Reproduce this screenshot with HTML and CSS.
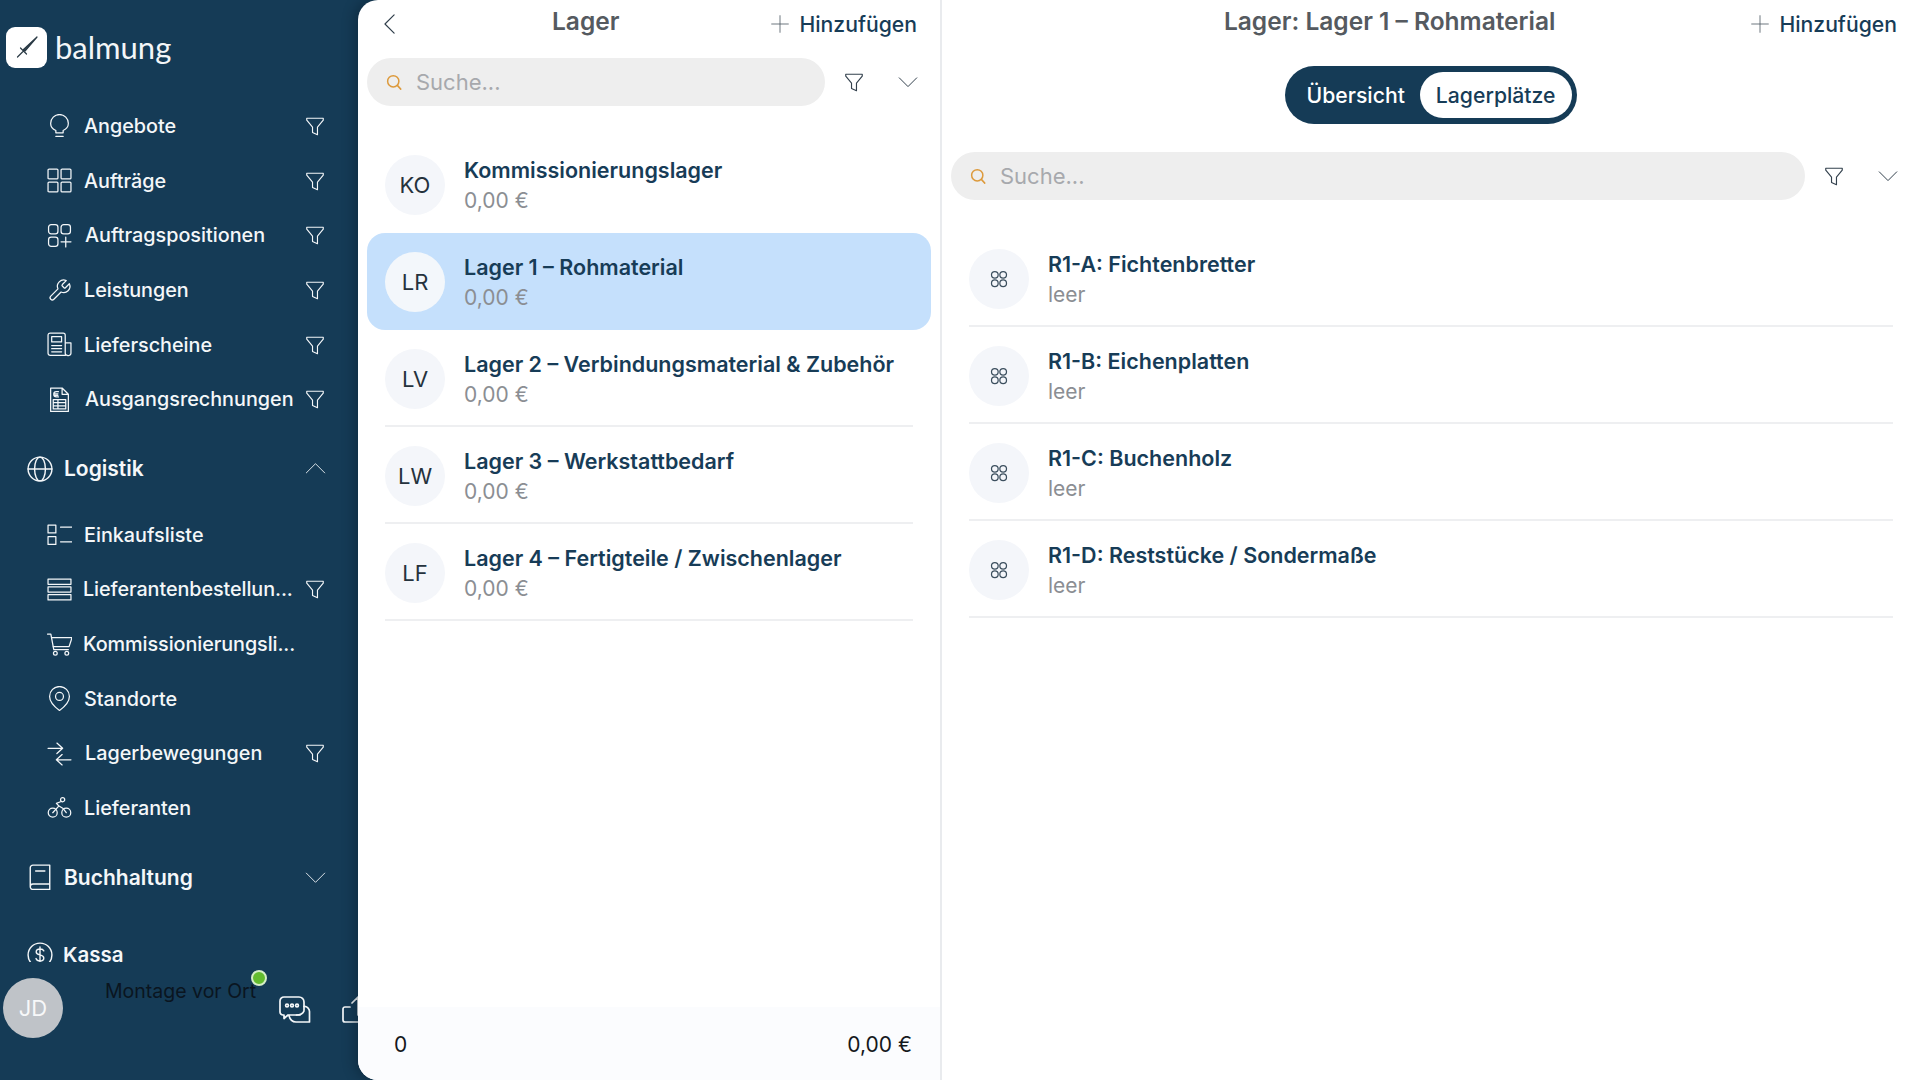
FILE: index.html
```
<!DOCTYPE html>
<html lang="de">
<head>
<meta charset="utf-8">
<title>Lager</title>
<link rel="stylesheet" href="styles.css">
</head>
<body>
<svg class="defs" width="0" height="0" aria-hidden="true">
  <symbol id="i-filter" viewBox="0 0 24 24"><path d="M3 3.500h18v2.200l-6.300 7.600v8.200l-5.400-2.400v-5.800L3 5.700z"/></symbol>
  <symbol id="i-search" viewBox="0 0 24 24"><circle cx="11" cy="11" r="7.500"/><path d="M16.500 16.500l4.500 5"/></symbol>
  <symbol id="i-down" viewBox="0 0 24 24"><path d="M1.500 7l10.500 10.500L22.500 7"/></symbol>
  <symbol id="i-up" viewBox="0 0 24 24"><path d="M1.500 17L12 6.500 22.500 17"/></symbol>
  <symbol id="i-back" viewBox="0 0 24 24"><path d="M16.500 2L6.500 12l10 10"/></symbol>
  <symbol id="i-plus" viewBox="0 0 24 24"><path d="M12 2v20M2 12h20"/></symbol>
  <symbol id="i-places" viewBox="0 0 24 24"><circle cx="7" cy="7" r="4"/><circle cx="17" cy="7" r="4"/><circle cx="7" cy="17" r="4"/><circle cx="17" cy="17" r="4"/></symbol>
  <symbol id="i-bulb" viewBox="0 0 24 24"><path d="M8.500 18v-2.200C5.400 14.400 3.500 12 3.500 9a8.500 8.500 0 0 1 17 0c0 3-1.900 5.400-5 6.800V18zM8.500 21.500h7"/></symbol>
  <symbol id="i-grid" viewBox="0 0 24 24"><rect x="1" y="1" width="9.500" height="9.500" rx="1"/><rect x="13.500" y="1" width="9.500" height="9.500" rx="1"/><rect x="1" y="13.500" width="9.500" height="9.500" rx="1"/><rect x="13.500" y="13.500" width="9.500" height="9.500" rx="1"/></symbol>
  <symbol id="i-gridplus" viewBox="0 0 24 24"><rect x="1.500" y="1.500" width="9" height="9" rx="2.500"/><rect x="13.500" y="1.500" width="9" height="9" rx="2.500"/><rect x="1.500" y="13.500" width="9" height="9" rx="2.500"/><path d="M18 13.500v9.500M13.500 18h9.500"/></symbol>
  <symbol id="i-wrench" viewBox="0 0 24 24"><path d="M14.700 6.300a1 1 0 0 0 0 1.400l1.600 1.600a1 1 0 0 0 1.400 0l3.770-3.770a6 6 0 0 1-7.940 7.940l-6.910 6.910a2.120 2.120 0 0 1-3-3l6.910-6.910a6 6 0 0 1 7.940-7.940l-3.760 3.760z"/></symbol>
  <symbol id="i-news" viewBox="0 0 24 24"><path d="M17.500 22.500H3A2 2 0 0 1 1 20.500V3A2 2 0 0 1 3 1h12.500a2 2 0 0 1 2 2v17.500a2 2 0 0 0 2 2 2.500 2.500 0 0 0 3.500-2V10.500h-5.500"/><rect x="4.500" y="4.500" width="9.500" height="5"/><path d="M4.500 13h9.500M4.500 16h9.500M4.500 19h9.500"/></symbol>
  <symbol id="i-invoice" viewBox="0 0 24 24"><path d="M14.500 1H3.500v22.500h17V7zM14.500 1v6h6"/><path d="M11 4.500H9a2 2 0 0 0 0 5h2M6.500 6.500h4M6.500 8h4"/><path d="M6 12h12v9H6zM6 15h12M6 18h12M10.500 12v9"/></symbol>
  <symbol id="i-globe" viewBox="0 0 24 24"><circle cx="12" cy="12" r="11"/><ellipse cx="12" cy="12" rx="5" ry="11"/><path d="M1 12h22"/></symbol>
  <symbol id="i-list" viewBox="0 0 24 24"><rect x="1" y="3" width="7.500" height="7.500"/><rect x="1" y="14" width="7.500" height="7.500"/><path d="M13 5h11M13 19h11"/></symbol>
  <symbol id="i-rows" viewBox="0 0 24 24"><rect x="1" y="2" width="22" height="5"/><rect x="1" y="9.500" width="22" height="5"/><rect x="1" y="17" width="22" height="5"/></symbol>
  <symbol id="i-cart" viewBox="0 0 24 24"><path d="M.5 2h3.200l2.800 15h14"/><path d="M4.500 5.500H24l-2.800 8.500H6"/><circle cx="8" cy="20.500" r="1.800"/><circle cx="19" cy="20.500" r="1.800"/></symbol>
  <symbol id="i-pin" viewBox="0 0 24 24"><path d="M12 23.500C8 20.500 2.500 15.500 2.500 10a9.500 9.500 0 0 1 19 0c0 5.500-5.500 10.500-9.500 13.500z"/><circle cx="12" cy="10" r="3.800"/></symbol>
  <symbol id="i-swap" viewBox="0 0 24 24"><path d="M1 7h13M9.500 2l5.500 5-5.500 5M23 18H10M14.500 13L9 18l5.500 5"/></symbol>
  <symbol id="i-bike" viewBox="0 0 24 24"><circle cx="5.500" cy="17" r="4.300"/><circle cx="18.500" cy="17" r="4.300"/><circle cx="15" cy="4.500" r="2"/><path d="M5.500 17l6-6.500 4 2.500 3 4M11.500 10.500L9 8l4-1.500"/></symbol>
  <symbol id="i-book" viewBox="0 0 24 24"><path d="M3 20.500V3.500A2.500 2.500 0 0 1 5.500 1H21v22.500H5.500A2.500 2.500 0 0 1 3 21a2.500 2.500 0 0 1 2.500-2.500H21"/><path d="M8 6.500h8.500"/></symbol>
  <symbol id="i-dollar" viewBox="0 0 24 24"><circle cx="12" cy="12" r="11"/><path d="M15.500 8.200C15 7 13.500 6.500 12 6.500c-2 0-3.500 1-3.500 2.700 0 3.600 7 1.800 7 5.500 0 1.800-1.600 2.800-3.500 2.800-1.700 0-3.200-.8-3.700-2.200M12 4.500v15"/></symbol>
  <symbol id="i-chat" viewBox="0 0 32 28"><path d="M21 19H9l-4 3.500V19H4a3 3 0 0 1-3-3V5a4 4 0 0 1 4-4h15a5 5 0 0 1 5 5v8"/><path d="M25 10.500a5 5 0 0 1 5.500 5V26H17c-3.500 0-6-2-7-6.500"/><path d="M17.500 19c3.500 0 6.500-1.500 7.500-4"/><circle cx="8" cy="9.500" r="1.400"/><circle cx="13" cy="9.500" r="1.400"/><circle cx="18" cy="9.500" r="1.400"/></symbol>
  <symbol id="i-upload" viewBox="0 0 32 28"><path d="M8 11H3a2 2 0 0 0-2 2v11a2 2 0 0 0 2 2h26a2 2 0 0 0 2-2V13a2 2 0 0 0-2-2h-5M16 19V1M10 7l6-6 6 6"/></symbol>
</svg>

<div class="app">
  <aside class="sidebar">
    <div class="brand">
      <div class="brand-mark">
        <svg class="sword" viewBox="0 0 24 24"><path d="M22 2L8.500 14.500l1.500 1.500L22 2z"/><path d="M5.500 13l6 6M9 15.500l-6.500 6.500"/></svg>
      </div>
      <span class="brand-name">balmung</span>
    </div>

    <nav class="nav">
      <a class="item"><svg class="ico"><use href="#i-bulb"/></svg><span class="label">Angebote</span><svg class="fil"><use href="#i-filter"/></svg></a>
      <a class="item"><svg class="ico"><use href="#i-grid"/></svg><span class="label">Aufträge</span><svg class="fil"><use href="#i-filter"/></svg></a>
      <a class="item"><svg class="ico"><use href="#i-gridplus"/></svg><span class="label shift">Auftragspositionen</span><svg class="fil"><use href="#i-filter"/></svg></a>
      <a class="item"><svg class="ico"><use href="#i-wrench"/></svg><span class="label">Leistungen</span><svg class="fil"><use href="#i-filter"/></svg></a>
      <a class="item"><svg class="ico"><use href="#i-news"/></svg><span class="label">Lieferscheine</span><svg class="fil"><use href="#i-filter"/></svg></a>
      <a class="item"><svg class="ico"><use href="#i-invoice"/></svg><span class="label shift">Ausgangsrechnungen</span><svg class="fil"><use href="#i-filter"/></svg></a>

      <a class="group open"><svg class="gico"><use href="#i-globe"/></svg><span class="label">Logistik</span><svg class="chev"><use href="#i-up"/></svg></a>

      <a class="item"><svg class="ico"><use href="#i-list"/></svg><span class="label">Einkaufsliste</span></a>
      <a class="item"><svg class="ico"><use href="#i-rows"/></svg><span class="label trunc">Lieferantenbestellun...</span><svg class="fil"><use href="#i-filter"/></svg></a>
      <a class="item"><svg class="ico"><use href="#i-cart"/></svg><span class="label trunc">Kommissionierungsli...</span></a>
      <a class="item"><svg class="ico"><use href="#i-pin"/></svg><span class="label">Standorte</span></a>
      <a class="item"><svg class="ico"><use href="#i-swap"/></svg><span class="label shift">Lagerbewegungen</span><svg class="fil"><use href="#i-filter"/></svg></a>
      <a class="item"><svg class="ico"><use href="#i-bike"/></svg><span class="label">Lieferanten</span></a>

      <a class="group closed"><svg class="gico"><use href="#i-book"/></svg><span class="label">Buchhaltung</span><svg class="chev"><use href="#i-down"/></svg></a>
      <a class="group cash"><svg class="gico"><use href="#i-dollar"/></svg><span class="label">Kassa</span></a>
    </nav>

    <div class="user">
      <div class="avatar">JD</div>
      <div class="status">Montage vor Ort<span class="dot"></span></div>
      <svg class="chat"><use href="#i-chat"/></svg>
      <svg class="upload"><use href="#i-upload"/></svg>
    </div>
  </aside>

  <main class="content">
    <section class="panel left">
      <header class="head">
        <svg class="back"><use href="#i-back"/></svg>
        <h1 class="title">Lager</h1>
        <button class="add"><svg class="plus"><use href="#i-plus"/></svg>Hinzufügen</button>
      </header>
      <div class="toolbar">
        <div class="search"><svg class="s-ico"><use href="#i-search"/></svg><span>Suche...</span></div>
        <div class="tools"><svg class="t-fil"><use href="#i-filter"/></svg><svg class="t-chev"><use href="#i-down"/></svg></div>
      </div>
      <div class="list">
        <div class="row plain"><div class="circle">KO</div><div class="text"><div class="name">Kommissionierungslager</div><div class="sub">0,00 €</div></div></div>
        <div class="row selected"><div class="circle">LR</div><div class="text"><div class="name">Lager 1 – Rohmaterial</div><div class="sub">0,00 €</div></div></div>
        <div class="row"><div class="circle">LV</div><div class="text"><div class="name">Lager 2 – Verbindungsmaterial &amp; Zubehör</div><div class="sub">0,00 €</div></div></div>
        <div class="row"><div class="circle">LW</div><div class="text"><div class="name">Lager 3 – Werkstattbedarf</div><div class="sub">0,00 €</div></div></div>
        <div class="row"><div class="circle">LF</div><div class="text"><div class="name">Lager 4 – Fertigteile / Zwischenlager</div><div class="sub">0,00 €</div></div></div>
      </div>
      <footer class="foot"><span>0</span><span>0,00 €</span></footer>
    </section>

    <section class="panel right">
      <header class="head">
        <span class="spacer"></span>
        <h2 class="title">Lager: Lager 1 – Rohmaterial</h2>
        <button class="add"><svg class="plus"><use href="#i-plus"/></svg>Hinzufügen</button>
      </header>
      <div class="toggle-wrap">
        <div class="toggle"><span class="opt">Übersicht</span><span class="opt active">Lagerplätze</span></div>
      </div>
      <div class="toolbar tight">
        <div class="search"><svg class="s-ico"><use href="#i-search"/></svg><span>Suche...</span></div>
        <div class="tools"><svg class="t-fil"><use href="#i-filter"/></svg><svg class="t-chev"><use href="#i-down"/></svg></div>
      </div>
      <div class="list">
        <div class="row"><div class="circle"><svg class="pl"><use href="#i-places"/></svg></div><div class="text"><div class="name">R1-A: Fichtenbretter</div><div class="sub">leer</div></div></div>
        <div class="row"><div class="circle"><svg class="pl"><use href="#i-places"/></svg></div><div class="text"><div class="name">R1-B: Eichenplatten</div><div class="sub">leer</div></div></div>
        <div class="row"><div class="circle"><svg class="pl"><use href="#i-places"/></svg></div><div class="text"><div class="name">R1-C: Buchenholz</div><div class="sub">leer</div></div></div>
        <div class="row"><div class="circle"><svg class="pl"><use href="#i-places"/></svg></div><div class="text"><div class="name">R1-D: Reststücke / Sondermaße</div><div class="sub">leer</div></div></div>
      </div>
    </section>
  </main>
</div>
</body>
</html>
```
FILE: styles.css
```
* { box-sizing: border-box; }
html, body { margin: 0; height: 100%; }
body { font-family: Inter, "Liberation Sans", sans-serif; color: #173c57; background: #153b56; overflow: hidden; }
.defs { position: absolute; }
svg { fill: none; stroke: currentColor; stroke-linecap: round; stroke-linejoin: round; display: block; flex: none; }

.app { display: flex; width: 1920px; height: 1080px; }

/* sidebar */
.sidebar { width: 358px; flex: none; background: #153b56; color: #f4f7f9; display: flex; flex-direction: column; overflow: hidden; }
.brand { height: 94px; flex: none; display: flex; align-items: center; padding: 0 0 0 6px; gap: 8px; }
.brand-mark { width: 41px; height: 41px; background: #fff; border-radius: 9px; display: flex; align-items: center; justify-content: center; color: #26343f; }
.sword { width: 24px; height: 24px; fill: #3a4a55; stroke: #2a3a45; stroke-width: 1.200; }
.brand-name { font-family: Lato, sans-serif; font-size: 31px; font-weight: 400; color: #f3f6f8; }
.nav { flex: 1; min-height: 0; overflow: hidden; padding-top: 5px; }
.item { height: 54.6px; display: flex; align-items: center; padding-left: 47px; padding-right: 32px; font-size: 19.800px; font-weight: 500; }
.ico { width: 25px; height: 25px; stroke-width: 1.200; margin-right: 12px; }
.label { white-space: nowrap; }
.label.shift { margin-left: 1px; }
.trunc { margin-left: -1px; letter-spacing: -.08px; }
.fil { width: 22px; height: 22px; stroke-width: 1.250; margin-left: auto; }
.group { height: 54px; display: flex; align-items: center; padding-left: 27px; padding-right: 32px; font-size: 21px; font-weight: 600; }
.group.open { margin-top: 15px; margin-bottom: 12px; }
.group.closed { margin-top: 15px; }
.group.cash { margin-top: 24px; font-size: 20.500px; }
.cash .label { line-height: 16px; margin-left: -1px; }
.gico { width: 26px; height: 26px; stroke-width: 1.300; margin-right: 11px; }
.chev { width: 21px; height: 21px; stroke-width: 1; margin-left: auto; }

.user { height: 118px; flex: none; position: relative; display: flex; align-items: flex-start; padding: 16px 0 0 3px; }
.avatar { width: 60px; height: 60px; border-radius: 50%; background: #bfc3c8; color: #f7f8f9; font-size: 22px; display: flex; align-items: center; justify-content: center; flex: none; }
.status { margin: 1px 0 0 42px; color: #0a1520; font-size: 19.500px; line-height: 24px; white-space: nowrap; position: relative; width: 150px; flex: none; }
.dot { position: absolute; right: -12px; top: -9px; width: 16px; height: 16px; background: #63bc2e; border: 2px solid #d5eec6; border-radius: 50%; }
.chat { width: 32px; height: 28px; stroke-width: 1.700; margin: 18px 0 0 24px; }
.upload { width: 32px; height: 28px; stroke-width: 1.700; margin: 18px 0 0 31px; }

/* main */
.content { flex: 1; min-width: 0; display: flex; background: #fff; border-radius: 20px 0 0 20px; box-shadow: -4px 0 12px rgba(5, 20, 32, .35); position: relative; }
.panel { display: flex; flex-direction: column; min-width: 0; }
.left { width: 584px; flex: none; border-right: 2px solid #e9ebee; border-radius: 20px 0 0 20px; overflow: hidden; }
.right { flex: 1; }

.head { height: 48px; flex: none; display: flex; align-items: center; justify-content: space-between; padding: 0 23px 0 22px; }
.left .head { padding-left: 21px; }
.right .head { padding-left: 87px; }
.spacer { width: 0; }
.back { width: 22px; height: 22px; stroke-width: 1.300; color: #33414d; }
.title { margin: 0 0 5px; font-size: 24.500px; font-weight: 600; color: #555a60; line-height: 1; }
.add { border: 0; padding: 0; background: none; font: 500 21.200px Inter, sans-serif; color: #173c57; display: flex; align-items: center; gap: 9px; }
.plus { width: 20px; height: 20px; stroke-width: 1; color: #505b66; }

.toolbar { display: flex; padding: 10px 9px 0; flex: none; }
.toolbar.tight { padding-top: 28px; }
.search { flex: 1; height: 48px; border-radius: 24px; background: #eeeeee; display: flex; align-items: center; padding-left: 18px; color: #a7a9ad; font-size: 22px; gap: 13px; }
.s-ico { width: 18px; height: 18px; stroke-width: 2; color: #dd9a3c; }
.tools { width: 106px; display: flex; align-items: center; padding-left: 18px; color: #33414d; }
.t-fil { width: 22px; height: 22px; stroke-width: 1.250; }
.t-chev { width: 20px; height: 20px; stroke-width: 1.200; margin-left: 33px; }

.list { margin-top: 30px; padding: 0 9px; }
.row { height: 97px; padding: 0 18px; display: flex; align-items: center; gap: 19px; position: relative; }
.row::after { content: ""; position: absolute; left: 18px; right: 18px; bottom: 0; height: 2px; background: #eeeff1; }
.row.plain::after, .row.selected::after { display: none; }
.selected { background: #c5e0fc; border-radius: 18px; }
.circle { width: 60px; height: 60px; flex: none; border-radius: 50%; background: #f4f6fa; color: #25323d; font-size: 22px; display: flex; align-items: center; justify-content: center; }
.selected .circle { background: #f3f7fb; }
.text { min-width: 0; padding-top: 3px; }
.name { font-size: 21.500px; font-weight: 600; color: #173c57; line-height: 29px; white-space: nowrap; }
.sub { font-size: 21px; color: #8b8e93; line-height: 31px; }
.pl { width: 20px; height: 20px; stroke-width: 1.500; color: #3c4f5e; }

.foot { margin-top: auto; height: 73px; flex: none; background: #fbfcfe; display: flex; align-items: center; justify-content: space-between; padding: 1px 28px 0 36px; font-size: 21px; color: #14181c; }

.toggle-wrap { display: flex; justify-content: center; padding-top: 18px; flex: none; }
.toggle { height: 58px; background: #153b56; border-radius: 29px; display: flex; align-items: center; padding: 0 5px 0 21px; gap: 15px; font-size: 21.200px; font-weight: 500; color: #fff; }
.opt.active { background: #fff; color: #173c57; height: 46px; border-radius: 23px; display: flex; align-items: center; padding: 0 16px; }
```
